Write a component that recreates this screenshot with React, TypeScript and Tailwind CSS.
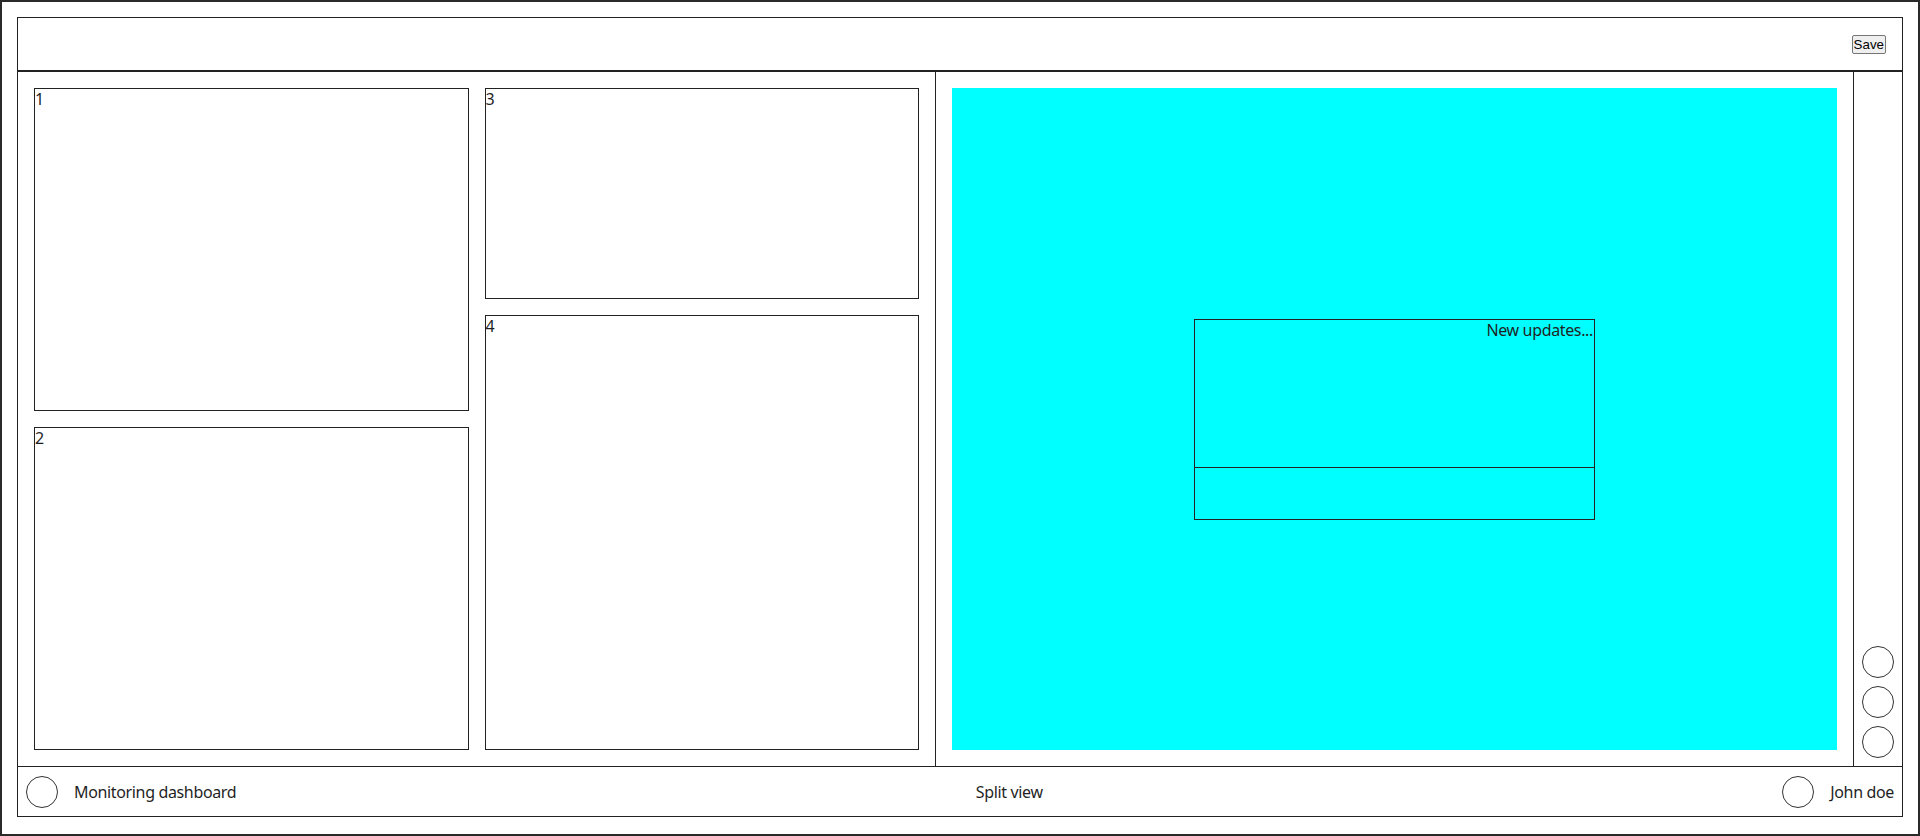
import React from "react";

const Panel = ({ label, className = "" }: { label: string; className?: string }) => (
  <div className={`border border-[#222] bg-white leading-[18px] ${className}`}>
    <span className="block pl-[0px] pt-[1px]">{label}</span>
  </div>
);

const Circle = () => <div className="w-8 h-8 rounded-full border border-[#333] shrink-0" />;

export default function App() {
  return (
    <div
      className="h-screen w-full border-2 border-[#2a2a2a] p-[15px] bg-white text-[#1f1f1f] text-[16px] tracking-[-0.35px]"
      style={{ fontFamily: '"Noto Sans", "Open Sans", sans-serif' }}
    >
      <div className="border border-[#222] flex flex-col">
        {/* Header */}
        <div className="h-[53px] border-b border-[#222] flex items-center justify-end pr-4">
          <button
            className="h-[19px] px-[1px] border border-[#767676] rounded-[2px] bg-[#efefef] text-[13.33px] leading-[15px] text-black tracking-normal"
            style={{ fontFamily: '"Liberation Sans", Arial, sans-serif' }}
          >
            Save
          </button>
        </div>
        {/* Main */}
        <div className="h-[696px] border-y border-[#222] flex">
          <div className="flex-1 border-r border-[#222] p-4 grid grid-cols-2 gap-4">
            <div className="flex flex-col gap-4">
              <Panel label="1" className="flex-1" />
              <Panel label="2" className="flex-1" />
            </div>
            <div className="flex flex-col gap-4">
              <Panel label="3" className="h-[211px]" />
              <Panel label="4" className="flex-1" />
            </div>
          </div>
          <div className="flex-1 p-4">
            <div className="h-full bg-[#00ffff] flex items-center justify-center">
              <div className="w-[401px] h-[201px] border border-[#222] flex flex-col">
                <div className="h-[148px] border-b border-[#222] text-right leading-[20px] pr-[1px]">
                  New updates...
                </div>
                <div className="flex-1" />
              </div>
            </div>
          </div>
          <div className="w-[49px] border-l border-[#222] flex flex-col justify-end items-center gap-2 pb-2">
            <Circle />
            <Circle />
            <Circle />
          </div>
        </div>
        {/* Footer */}
        <div className="h-[49px] flex items-center justify-between px-2">
          <div className="flex items-center gap-4">
            <Circle />
            <span>Monitoring dashboard</span>
          </div>
          <span>Split view</span>
          <div className="flex items-center gap-4">
            <Circle />
            <span>John doe</span>
          </div>
        </div>
      </div>
    </div>
  );
}
